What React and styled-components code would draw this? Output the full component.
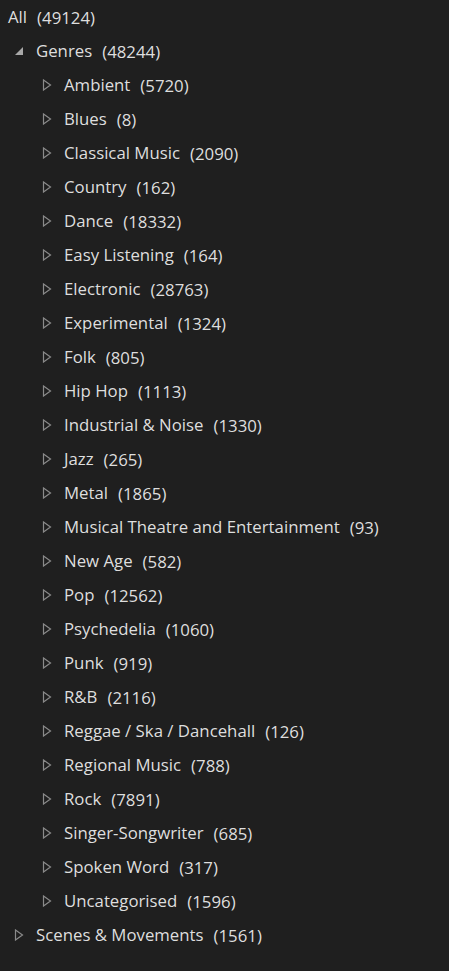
import React from "react"
import styled, { createGlobalStyle } from "styled-components"

const GlobalStyle = createGlobalStyle`
  html, body {
    margin: 0;
    padding: 0;
    background: #1f1f1f;
  }
  body {
    font-family: "Open Sans", "Noto Sans", sans-serif;
  }
`

const genres = [
  ["Ambient", 5720],
  ["Blues", 8],
  ["Classical Music", 2090],
  ["Country", 162],
  ["Dance", 18332],
  ["Easy Listening", 164],
  ["Electronic", 28763],
  ["Experimental", 1324],
  ["Folk", 805],
  ["Hip Hop", 1113],
  ["Industrial & Noise", 1330],
  ["Jazz", 265],
  ["Metal", 1865],
  ["Musical Theatre and Entertainment", 93],
  ["New Age", 582],
  ["Pop", 12562],
  ["Psychedelia", 1060],
  ["Punk", 919],
  ["R&B", 2116],
  ["Reggae / Ska / Dancehall", 126],
  ["Regional Music", 788],
  ["Rock", 7891],
  ["Singer-Songwriter", 685],
  ["Spoken Word", 317],
  ["Uncategorised", 1596],
]

const Tree = styled.div`
  width: 449px;
  min-height: 971px;
  background: #1f1f1f;
  color: #dedede;
  font-size: 16.8px;
`

const Row = styled.div`
  display: flex;
  align-items: center;
  height: 34px;
  padding-left: ${(p) => p.indent}px;
  white-space: pre;
`

const Toggle = styled.span`
  width: 28px;
  display: flex;
  align-items: center;
  justify-content: flex-start;
  padding-left: 6px;
  box-sizing: border-box;
`

const Label = styled.span`
  line-height: 34px;
`

const Count = styled.span`
  margin-left: 10px;
`

const Caret = ({ open }) =>
  open ? (
    <svg width="10" height="10" viewBox="0 0 10 10">
      <path d="M9 1 L9 9 L1 9 Z" fill="#a8a8a8" />
    </svg>
  ) : (
    <svg width="10" height="12" viewBox="0 0 10 12">
      <path d="M1.5 1 L8.5 6 L1.5 11 Z" fill="none" stroke="#8a8a8a" strokeWidth="1.2" />
    </svg>
  )

const Node = ({ indent, open, leafless, name, count }) => (
  <Row indent={indent}>
    {!leafless && (
      <Toggle>
        <Caret open={open} />
      </Toggle>
    )}
    <Label>{name}</Label>
    <Count>({count})</Count>
  </Row>
)

export default function App() {
  return (
    <>
      <GlobalStyle />
      <Tree>
        <Node indent={8} leafless name="All" count={49124} />
        <Node indent={8} open name="Genres" count={48244} />
        {genres.map(([name, count]) => (
          <Node key={name} indent={36} name={name} count={count} />
        ))}
        <Node indent={8} name="Scenes & Movements" count={1561} />
      </Tree>
    </>
  )
}
